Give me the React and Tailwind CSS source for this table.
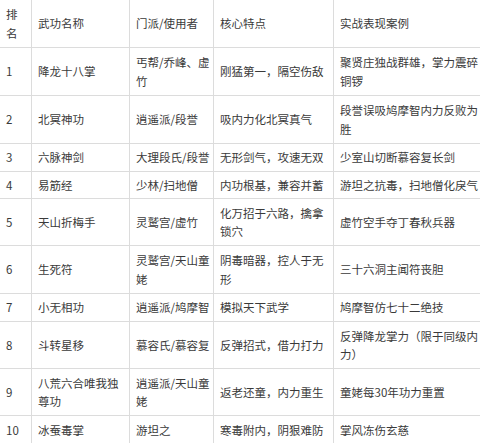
import React from "react";

const rows = [
  ["h-[48px]", ["排\n名", "武功名称", "门派/使用者", "核心特点", "实战表现案例"]],
  ["h-[48px]", ["1", "降龙十八掌", "丐帮/乔峰、虚\n竹", "刚猛第一，隔空伤敌", "聚贤庄独战群雄，掌力震碎\n铜锣"]],
  ["h-[48px]", ["2", "北冥神功", "逍遥派/段誉", "吸内力化北冥真气", "段誉误吸鸠摩智内力反败为\n胜"]],
  ["h-[28px]", ["3", "六脉神剑", "大理段氏/段誉", "无形剑气，攻速无双", "少室山切断慕容复长剑"]],
  ["h-[27px]", ["4", "易筋经", "少林/扫地僧", "内功根基，兼容并蓄", "游坦之抗毒，扫地僧化戾气"]],
  ["h-[47px]", ["5", "天山折梅手", "灵鹫宫/虚竹", "化万招于六路，擒拿\n锁穴", "虚竹空手夺丁春秋兵器"]],
  ["h-[48px]", ["6", "生死符", "灵鹫宫/天山童\n姥", "阴毒暗器，控人于无\n形", "三十六洞主闻符丧胆"]],
  ["h-[28px]", ["7", "小无相功", "逍遥派/鸠摩智", "模拟天下武学", "鸠摩智仿七十二绝技"]],
  ["h-[47px]", ["8", "斗转星移", "慕容氏/慕容复", "反弹招式，借力打力", "反弹降龙掌力（限于同级内\n力）"]],
  ["h-[47px]", ["9", "八荒六合唯我独\n尊功", "逍遥派/天山童\n姥", "返老还童，内力重生", "童姥每30年功力重置"]],
  ["h-[30px]", ["10", "冰蚕毒掌", "游坦之", "寒毒附内，阴狠难防", "掌风冻伤玄慈"]],
];

const widths = ["w-[32px]", "w-[98px]", "w-[84px]", "w-[120px]", "w-[152px]"];

export default function App() {
  const cell =
    "border border-[#dcdcdc] pl-[6px] pr-[2px] py-0 align-middle text-left font-normal whitespace-pre overflow-hidden";
  return (
    <div
      className="w-[480px] h-[443px] overflow-hidden bg-white text-[#3a3a3a] text-[11.5px] leading-[18.5px]"
      style={{ fontFamily: '"Noto Sans CJK SC", "Noto Sans", sans-serif' }}
    >
      <table className="border-collapse table-fixed w-[486px] -mt-px -ml-px">
        <colgroup>
          {widths.map((w, i) => (
            <col key={i} className={w} />
          ))}
        </colgroup>
        <tbody>
          {rows.map(([h, r], i) => (
            <tr key={i} className={h}>
              {r.map((c, j) => (
                <td key={j} className={cell}>
                  {c}
                </td>
              ))}
            </tr>
          ))}
        </tbody>
      </table>
    </div>
  );
}
